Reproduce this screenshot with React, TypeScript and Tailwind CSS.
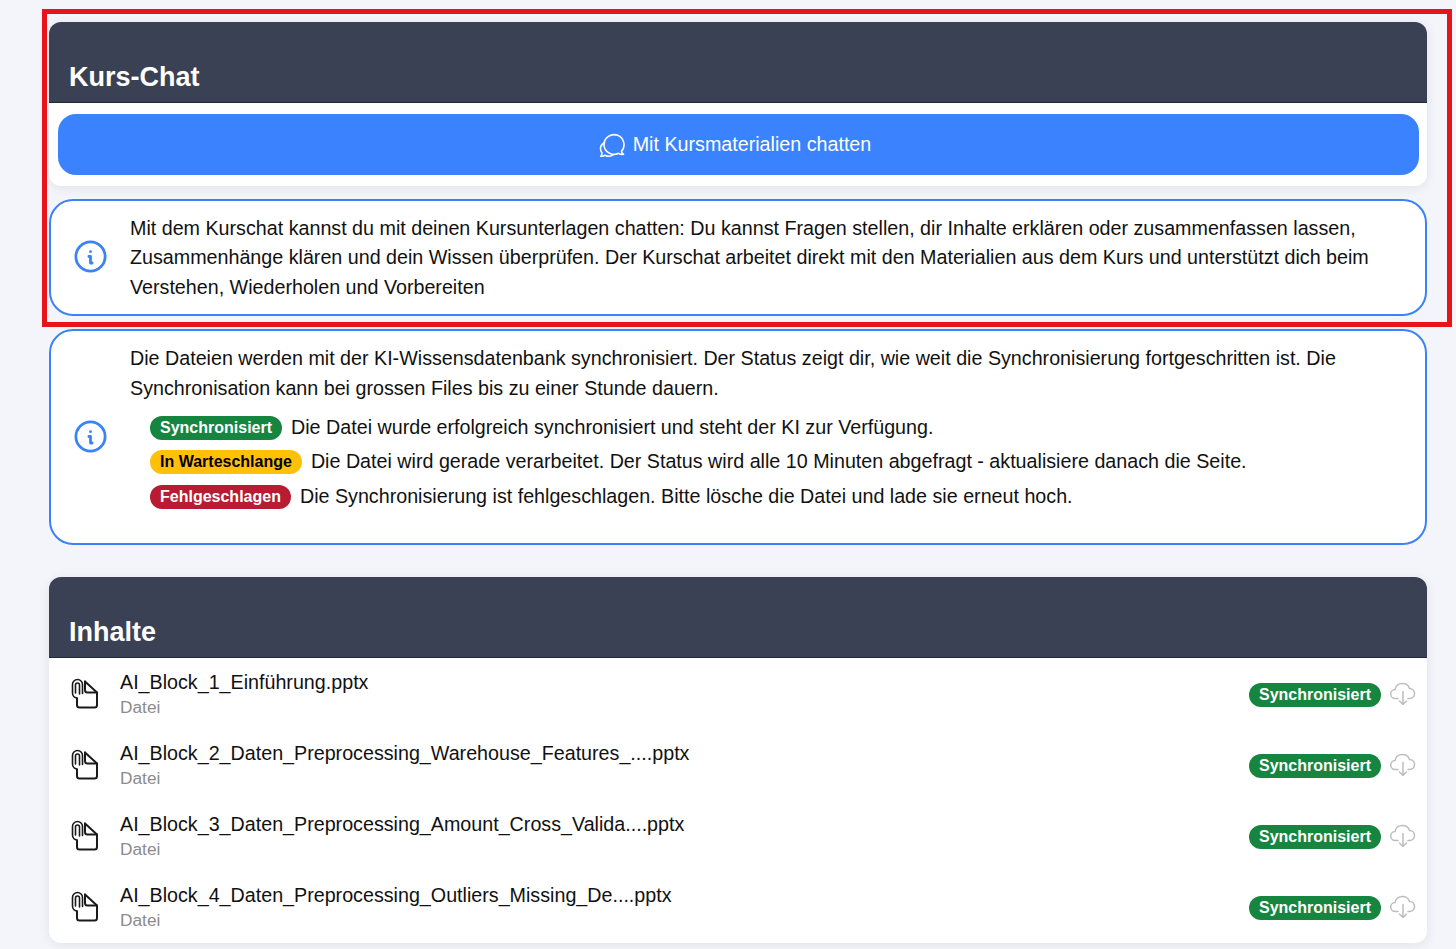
import { TbInfoCircle } from "react-icons/tb";

const FONT = "font-['Liberation_Sans',Arial,sans-serif]";

const FILES = [
  "AI_Block_1_Einführung.pptx",
  "AI_Block_2_Daten_Preprocessing_Warehouse_Features_....pptx",
  "AI_Block_3_Daten_Preprocessing_Amount_Cross_Valida....pptx",
  "AI_Block_4_Daten_Preprocessing_Outliers_Missing_De....pptx",
];

function ChatsIcon() {
  return (
    <svg width="26" height="26" viewBox="0 0 26 26" fill="none" stroke="currentColor" strokeWidth="1.6" strokeLinecap="round" strokeLinejoin="round">
      <path d="M5 12.500a10 10 0 1 1 17.500 6.800c0 1.200.8 2.200 2 3-1.800.3-3.500 0-5-1A10 10 0 0 1 5 12.500z" />
      <path d="M5.500 10.500C3 12 1.500 14 1.500 16.500c0 1.700.6 3.200 1.500 4.400 0 1.200-.4 2.300-1.200 3.300 1.800.2 3.200-.2 4.300-1 2.600 1.400 6.200 1.200 8.500-.8" />
    </svg>
  );
}

function PaperFileIcon() {
  return (
    <svg width="30" height="32" viewBox="0 0 30 32" fill="none" stroke="currentColor" strokeWidth="2" strokeLinecap="round" strokeLinejoin="round" className="text-[#1a1a1a]">
      <path d="M16 3.500l12 11V27a2.500 2.500 0 0 1-2.500 2.500h-15A2.500 2.500 0 0 1 8 27v-6.500" />
      <path d="M16 3.500V12a2.500 2.500 0 0 0 2.500 2.500H28" />
      <path d="M13.500 15.500v-9a5 5 0 0 0-10 0V15a5 5 0 0 0 4.500 5" strokeWidth="1.600" />
      <path d="M10.500 16V7a2 2 0 0 0-4 0v8" strokeWidth="1.600" />
    </svg>
  );
}

function CloudIcon() {
  return (
    <svg width="26" height="24" viewBox="0 0 26 24" fill="none" stroke="#bdbdbd" strokeWidth="1.500" strokeLinecap="round" strokeLinejoin="round" className="mb-[2px]">
      <path d="M8 16.500H5.500a4.500 4.500 0 0 1-.5-9c.7-3.500 3.500-6 7.500-6 3.500 0 6 2 7 5 3 0 5 2.200 5 5s-2 5-5 5H18" />
      <path d="M13 9.500v13M9.500 19l3.500 3.500 3.500-3.500" />
    </svg>
  );
}

function Badge({ tone, children }: { tone: "green" | "yellow" | "red"; children: string }) {
  const tones = {
    green: "bg-[#16853f] text-white",
    yellow: "bg-[#ffc107] text-black",
    red: "bg-[#b91c32] text-white",
  };
  return (
    <span className={`inline-flex h-[24px] shrink-0 items-center rounded-full px-[10px] text-[16px] font-bold ${tones[tone]}`}>
      {children}
    </span>
  );
}

function CardHeader({ title }: { title: string }) {
  return (
    <div className="flex h-[81px] items-end rounded-t-[12px] border-b border-[#1f2937] bg-[#3a4154] px-5 pb-[9px]">
      <h2 className="text-[27px] leading-[32px] font-bold text-white">{title}</h2>
    </div>
  );
}

function InfoBox({ className, children }: { className: string; children: React.ReactNode }) {
  return (
    <div className={`flex items-center rounded-[24px] border-2 border-[#3b82f6] bg-white pr-[20px] pl-[20px] ${className}`}>
      <TbInfoCircle className="mr-[20px] mb-[2px] shrink-0 text-[#3b82f6]" size={39} strokeWidth={1.7} />
      <div className="min-w-0 flex-1">{children}</div>
    </div>
  );
}

export default function App() {
  return (
    <div className={`relative h-[949px] overflow-hidden bg-[#f3f5fa] pt-[22px] pr-[29px] pl-[49px] text-[19.7px] leading-[29.5px] text-[#111] ${FONT}`}>
      <div className="rounded-[12px] bg-white shadow-[0_2px_12px_rgba(0,0,0,0.08)]">
        <CardHeader title="Kurs-Chat" />
        <div className="pt-[11px] pr-[8px] pb-[11px] pl-[9px]">
          <button className="flex h-[61px] w-full items-center justify-center gap-[8px] rounded-[18px] bg-[#3b82ff] pr-[7px] text-white">
            <ChatsIcon />
            <span>Mit Kursmaterialien chatten</span>
          </button>
        </div>
      </div>

      <InfoBox className="mt-[13px] h-[117px]">
        <p className="pt-[1px]">
          Mit dem Kurschat kannst du mit deinen Kursunterlagen chatten: Du kannst Fragen stellen, dir Inhalte erklären oder zusammenfassen lassen, Zusammenhänge klären und dein Wissen überprüfen. Der Kurschat arbeitet direkt mit den Materialien aus dem Kurs und unterstützt dich beim Verstehen, Wiederholen und Vorbereiten
        </p>
      </InfoBox>

      <InfoBox className="mt-[13px] h-[216px]">
        <div className="pb-[20px]">
          <p className="leading-[30px]">
            Die Dateien werden mit der KI-Wissensdatenbank synchronisiert. Der Status zeigt dir, wie weit die Synchronisierung fortgeschritten ist. Die Synchronisation kann bei grossen Files bis zu einer Stunde dauern.
          </p>
          <ul className="mt-[10px] space-y-[5px] pl-[20px]">
            <li className="flex items-center gap-[9px]">
              <Badge tone="green">Synchronisiert</Badge>
              <span>Die Datei wurde erfolgreich synchronisiert und steht der KI zur Verfügung.</span>
            </li>
            <li className="flex items-center gap-[9px]">
              <Badge tone="yellow">In Warteschlange</Badge>
              <span>Die Datei wird gerade verarbeitet. Der Status wird alle 10 Minuten abgefragt - aktualisiere danach die Seite.</span>
            </li>
            <li className="flex items-center gap-[9px]">
              <Badge tone="red">Fehlgeschlagen</Badge>
              <span>Die Synchronisierung ist fehlgeschlagen. Bitte lösche die Datei und lade sie erneut hoch.</span>
            </li>
          </ul>
        </div>
      </InfoBox>

      <div className="mt-[32px] rounded-[12px] bg-white shadow-[0_2px_12px_rgba(0,0,0,0.08)]">
        <CardHeader title="Inhalte" />
        <ul className="pb-[1px]">
          {FILES.map((file) => (
            <li key={file} className="flex h-[71px] items-center pt-[1px] pr-[11px] pl-[20px]">
              <PaperFileIcon />
              <div className="ml-[21px] min-w-0 flex-1">
                <div className="leading-[25px]">{file}</div>
                <div className="text-[17.3px] leading-[24px] text-[#8c8c8c]">Datei</div>
              </div>
              <div className="flex items-center gap-[9px] pt-[2px]">
                <Badge tone="green">Synchronisiert</Badge>
                <CloudIcon />
              </div>
            </li>
          ))}
        </ul>
      </div>

      <div className="pointer-events-none absolute top-[9px] left-[42px] h-[318px] w-[1410px] border-[5px] border-[#e8141c]" />
    </div>
  );
}
